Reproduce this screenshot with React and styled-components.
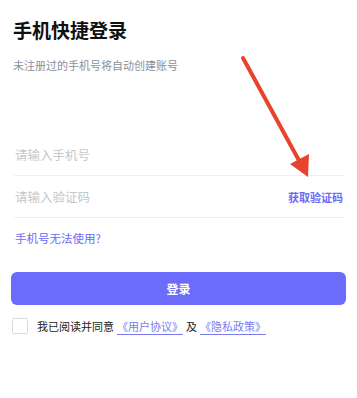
import React from 'react';
import styled, { createGlobalStyle } from 'styled-components';

const GlobalStyle = createGlobalStyle`
  html, body {
    margin: 0;
    padding: 0;
    background: #ffffff;
  }
  body {
    font-family: "Noto Sans CJK SC", "Noto Sans", sans-serif;
  }
`;

const Page = styled.div`
  position: relative;
  width: 357px;
  height: 398px;
  box-sizing: border-box;
  padding: 17px 11px 0;
  overflow: hidden;
`;

const Title = styled.h1`
  margin: 0 0 0 2px;
  font-size: 19px;
  line-height: 26px;
  font-weight: 700;
  color: #111111;
`;

const Subtitle = styled.p`
  margin: 14px 0 0 2px;
  font-size: 11px;
  line-height: 16px;
  color: #8a8f9c;
`;

const Form = styled.div`
  margin: 61px 2px 0 3px;
`;

const Field = styled.div`
  display: flex;
  align-items: center;
  justify-content: space-between;
  height: 41px;
  border-bottom: 1px solid #eef0f8;
`;

const Input = styled.input`
  flex: 1;
  min-width: 0;
  border: none;
  outline: none;
  padding: 0 0 0 1px;
  background: transparent;
  font-family: inherit;
  font-size: 12.5px;
  color: #222;
  &::placeholder {
    color: #c6c7cc;
  }
`;

const CodeButton = styled.span`
  font-size: 11px;
  font-weight: 700;
  color: #6a6bf6;
  margin-right: 1px;
`;

const HelpLink = styled.a`
  display: block;
  margin: 12px 0 0 1px;
  font-size: 11.5px;
  line-height: 16px;
  color: #6a6bf6;
  text-decoration: none;
`;

const LoginButton = styled.button`
  display: block;
  width: 100%;
  height: 33px;
  margin-top: 26px;
  border: none;
  border-radius: 6px;
  background: #6b6cfb;
  color: #ffffff;
  font-family: inherit;
  font-size: 12px;
  font-weight: 700;
`;

const Agreement = styled.div`
  display: flex;
  align-items: center;
  margin: 13px 0 0 1px;
  font-size: 11px;
  color: #222222;
`;

const Checkbox = styled.span`
  width: 14px;
  height: 14px;
  border: 1px solid #dcdcdc;
  border-radius: 2px;
  margin-right: 9px;
  flex-shrink: 0;
`;

const Doc = styled.a`
  color: #7a7bef;
  text-decoration: underline;
  text-underline-offset: 3px;
  margin: 0 ${props => props.gap || 4}px;
`;

const Arrow = styled.svg`
  position: absolute;
  left: 0;
  top: 0;
  pointer-events: none;
`;

export default function App() {
  return (
    <>
      <GlobalStyle />
      <Page>
        <Title>手机快捷登录</Title>
        <Subtitle>未注册过的手机号将自动创建账号</Subtitle>
        <Form>
          <Field>
            <Input placeholder="请输入手机号" />
          </Field>
          <Field>
            <Input placeholder="请输入验证码" />
            <CodeButton>获取验证码</CodeButton>
          </Field>
          <HelpLink>手机号无法使用?</HelpLink>
        </Form>
        <LoginButton>登录</LoginButton>
        <Agreement>
          <Checkbox />
          我已阅读并同意
          <Doc gap={3}>《用户协议》</Doc>
          及
          <Doc gap={3}>《隐私政策》</Doc>
        </Agreement>
        <Arrow width="357" height="398" viewBox="0 0 357 398">
          <line x1="243" y1="58" x2="302" y2="166" stroke="#e8432e" strokeWidth="4" strokeLinecap="round" />
          <polygon points="290,164 309,154 308,177" fill="#e8432e" />
        </Arrow>
      </Page>
    </>
  );
}
